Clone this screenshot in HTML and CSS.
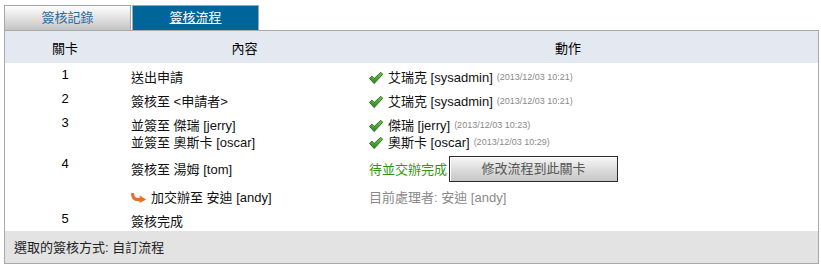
FILE: index.html
```html
<!DOCTYPE html>
<html lang="zh-Hant">
<head>
<meta charset="utf-8">
<title>簽核流程</title>
<link rel="stylesheet" href="styles.css">
</head>
<body>
<div class="wrap">
  <div class="tabs">
    <div class="tab">簽核記錄</div>
    <div class="tab active"><span class="u">簽核流程</span></div>
  </div>
  <div class="panel">
    <div class="head">
      <div class="hc">關卡</div>
      <div class="hc">內容</div>
      <div class="hc h3">動作</div>
    </div>

    <div class="step">
      <div class="num">1</div>
      <div class="details">
        <div class="line">
          <div class="content">送出申請</div>
          <div class="action"><svg class="chk" viewBox="0 0 14 12"><use href="#check"/></svg>艾瑞克 [sysadmin] <span class="ts">(2013/12/03 10:21)</span></div>
        </div>
      </div>
    </div>

    <div class="step">
      <div class="num">2</div>
      <div class="details">
        <div class="line">
          <div class="content">簽核至 &lt;申請者&gt;</div>
          <div class="action"><svg class="chk" viewBox="0 0 14 12"><use href="#check"/></svg>艾瑞克 [sysadmin] <span class="ts">(2013/12/03 10:21)</span></div>
        </div>
      </div>
    </div>

    <div class="step">
      <div class="num">3</div>
      <div class="details">
        <div class="line">
          <div class="content">並簽至 傑瑞 [jerry]</div>
          <div class="action"><svg class="chk" viewBox="0 0 14 12"><use href="#check"/></svg>傑瑞 [jerry] <span class="ts">(2013/12/03 10:23)</span></div>
        </div>
        <div class="line">
          <div class="content">並簽至 奧斯卡 [oscar]</div>
          <div class="action"><svg class="chk" viewBox="0 0 14 12"><use href="#check"/></svg>奧斯卡 [oscar] <span class="ts">(2013/12/03 10:29)</span></div>
        </div>
      </div>
    </div>

    <div class="step step-wait">
      <div class="num">4</div>
      <div class="details">
        <div class="line tall">
          <div class="content">簽核至 湯姆 [tom]</div>
          <div class="action"><span class="pending">待並交辦完成</span><button class="btn" type="button">修改流程到此關卡</button></div>
        </div>
        <div class="line sub">
          <div class="content"><svg class="arrow" viewBox="0 0 16 10"><path d="M1.6 1.2 C1.8 5.4 4.2 7 9 6.6" fill="none" stroke="#e8702a" stroke-width="3.2" stroke-linecap="round"/><path d="M8.6 2.6 L15.2 6.4 L8.6 10 Z" fill="#e8702a"/></svg>加交辦至 安迪 [andy]</div>
          <div class="action current">目前處理者: 安迪 [andy]</div>
        </div>
      </div>
    </div>

    <div class="step">
      <div class="num">5</div>
      <div class="details">
        <div class="line">
          <div class="content">簽核完成</div>
          <div class="action"></div>
        </div>
      </div>
    </div>

    <div class="foot">選取的簽核方式: 自訂流程</div>
  </div>
</div>

<svg width="0" height="0" class="defs">
  <defs>
    <linearGradient id="gchk" x1="0" y1="0" x2="0" y2="1">
      <stop offset="0" stop-color="#6fcb48"/>
      <stop offset="1" stop-color="#27851a"/>
    </linearGradient>
    <symbol id="check" viewBox="0 0 14 12">
      <path d="M0.5 6.4 L2.9 4.1 L5.2 6.5 L11.7 0.3 L13.7 2.3 L5.2 11.6 Z" fill="url(#gchk)" stroke="#256a18" stroke-width="0.9" stroke-linejoin="round"/>
    </symbol>
  </defs>
</svg>
</body>
</html>
```

FILE: styles.css
```css
html, body {
  margin: 0;
  padding: 0;
  background: #ffffff;
}

body {
  font-family: "Liberation Sans", "Noto Sans CJK TC", sans-serif;
  font-size: 13px;
  color: #111;
}

.wrap {
  padding: 5px 2px 0 4px;
}

.tabs {
  display: flex;
  height: 25px;
}

.tab {
  box-sizing: border-box;
  width: 127px;
  height: 25px;
  border: 1px solid #a6a6a6;
  border-bottom: none;
  background: linear-gradient(#fefefe, #c4c4c4);
  color: #2b6c9c;
  text-align: center;
  line-height: 24px;
  font-size: 13px;
}

.tab + .tab {
  margin-left: 1px;
}

.tab.active {
  background: #006699;
  color: #ffffff;
}

.tab .u {
  text-decoration: underline;
}

.panel {
  box-sizing: border-box;
  width: 815px;
  border: 1px solid #a9a9a9;
}

.head {
  display: grid;
  grid-template-columns: 120px 239px 1fr;
  background: #e4e9f1;
  padding: 9px 0 5px;
  line-height: 18px;
}

.hc {
  text-align: center;
  color: #000;
}

.h3 {
  padding-right: 46px;
}

.step {
  display: flex;
  padding: 3px 0 1px;
}

.num {
  width: 120px;
  flex: none;
  text-align: center;
  line-height: 17px;
  color: #000;
}

.details {
  flex: 1;
  padding-top: 3px;
}

.line {
  display: grid;
  grid-template-columns: 239px 1fr;
  line-height: 17px;
  align-items: center;
}

.content {
  padding-left: 6px;
  display: flex;
  align-items: center;
  white-space: nowrap;
}

.action {
  padding-left: 5px;
  display: flex;
  align-items: center;
  white-space: nowrap;
}

.chk {
  width: 14px;
  height: 12px;
  margin-right: 5px;
  flex: none;
}

.ts {
  font-size: 9px;
  color: #8a8a8a;
  margin-left: 4px;
}

.step-wait .details {
  padding-top: 1px;
}

.line.tall {
  height: 26px;
}

.line.sub {
  margin-top: 7px;
}

.pending {
  color: #359410;
}

.btn {
  box-sizing: border-box;
  width: 169px;
  height: 26px;
  margin-left: 2px;
  padding: 0;
  border: 1px solid #2a2a2a;
  box-shadow: inset 1px 1px 0 #ffffff;
  background: linear-gradient(#f6f6f6, #c6c6c6);
  color: #555;
  font-family: "Liberation Sans", "Noto Sans CJK TC", sans-serif;
  font-size: 13px;
  line-height: 22px;
}

.arrow {
  width: 16px;
  height: 10px;
  margin-right: 4px;
  flex: none;
}

.current {
  color: #8a8a8a;
}

.foot {
  background: #e3e3e3;
  padding: 8px 9px 6px;
  line-height: 18px;
  color: #222;
}

.defs {
  position: absolute;
  width: 0;
  height: 0;
  overflow: hidden;
}
```
